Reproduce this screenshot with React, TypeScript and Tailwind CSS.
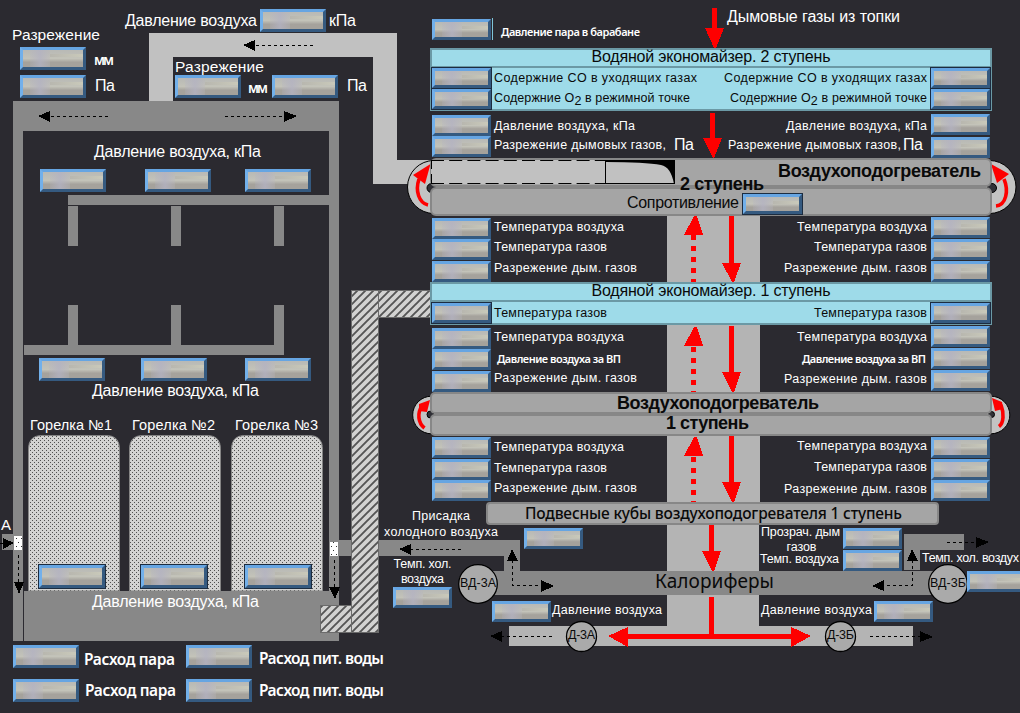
import { useLayoutEffect, useRef } from "react";
import type { ReactNode } from "react";

type Face = "sans" | "bold" | "noto" | "notoMedium" | "notoBold";

const faces: Record<Face, string> = {
  sans: "font-['Liberation_Sans',sans-serif]",
  bold: "font-['Liberation_Sans',sans-serif] font-bold",
  noto: "font-['Noto_Sans',sans-serif]",
  notoMedium: "font-['Noto_Sans',sans-serif] font-medium",
  notoBold: "font-['Noto_Sans',sans-serif] font-semibold",
};

interface LabelProps {
  className: string;
  face?: Face;
  dark?: boolean;
  children: ReactNode;
}

/* A caption whose letters are spaced out to fill the width of its box. */
function Label({ className, face = "sans", dark = false, children }: LabelProps) {
  const box = useRef<HTMLDivElement>(null);
  const text = useRef<HTMLSpanElement>(null);
  useLayoutEffect(() => {
    if (!box.current || !text.current) return;
    text.current.style.letterSpacing = "0px";
    const count = (text.current.textContent ?? "").length;
    const room = box.current.clientWidth - text.current.getBoundingClientRect().width;
    text.current.style.letterSpacing = `${room / Math.max(1, count - 1)}px`;
  }, []);
  return (
    <div
      ref={box}
      className={`h-[20px] shrink-0 leading-[20px] whitespace-nowrap ${faces[face]} ${dark ? "text-[#0a0a0a]" : "text-white"} ${className}`}
    >
      <span ref={text}>{children}</span>
    </div>
  );
}

function Display({ className = "", wide = false, framed = false }: { className?: string; wide?: boolean; framed?: boolean }) {
  const size = wide ? "h-[23px] w-[66px]" : framed ? "h-[20px] w-[59px]" : "h-[21px] w-[59px]";
  return (
    <div
      className={`flex shrink-0 border-[3px] border-t-[#66a5e2] border-r-[#355a80] border-b-[#355a80] border-l-[#72b0ea] bg-linear-to-b from-[#b9bab6] from-5% via-[#c3c3b9] via-50% to-[#a5a29c] to-72% pl-[7px] ${size} ${framed ? "outline outline-[#1c2c40]" : ""} ${className}`}
    >
      <div className="h-full w-[20px] bg-linear-to-r from-[#b2b1c4]/20 via-[#b3b2c2]/80 to-[#b8b6bc]/30" />
      <div className="mt-[4px] h-[3px] flex-1 bg-linear-to-r from-[#b8b7af] to-[#c9c9ba]" />
    </div>
  );
}

const RED = "#fe0000";

function Pipes() {
  return (
    <svg className="absolute inset-0" width="1020" height="713" viewBox="0 0 1020 713">
      <defs>
        <pattern id="dots" width="4" height="4" patternUnits="userSpaceOnUse">
          <rect width="4" height="4" fill="#d3d3d2" />
          <rect x="0" y="0" width="1" height="1" fill="#505050" />
          <rect x="2" y="2" width="1" height="1" fill="#505050" />
        </pattern>
        <pattern id="sparse" width="5" height="8" patternUnits="userSpaceOnUse">
          <rect width="5" height="8" fill="#fff" />
          <rect x="1" y="2" width="1" height="1" fill="#333" />
          <rect x="3" y="6" width="1" height="1" fill="#333" />
        </pattern>
        <pattern id="hatch" width="8" height="8" patternUnits="userSpaceOnUse">
          <rect width="8" height="8" fill="#d2d2d1" />
          <path d="M-2 2L2 -2M-1 9L9 -1M6 10L10 6" stroke="#555" strokeWidth="1.9" />
        </pattern>
      </defs>

      {/* boiler casing and burner headers */}
      <g fill="#888888" shapeRendering="crispEdges">
        <path d="M13 101H339V641H24V591H329V131H23V641H13Z" />
        <rect x="68" y="195" width="261" height="10" />
        <rect x="24" y="345" width="260" height="10" />
        {[68, 171, 274].map((x) => (
          <g key={x}>
            <rect x={x} y="206" width="10" height="40" />
            <rect x={x} y="305" width="10" height="41" />
          </g>
        ))}
        <rect x="2" y="534" width="12" height="16" />
      </g>

      {/* burners */}
      {[28.5, 129.5, 231.5].map((x) => (
        <path key={x} d={`M${x} 591V449Q${x} 435.500 ${x + 13} 435.500H${x + 78}Q${x + 91} 435.500 ${x + 91} 449V591Z`} fill="url(#dots)" stroke="#858585" />
      ))}
      <rect x="24" y="591" width="315" height="50" fill="#888" />

      {/* ducts */}
      <path d="M149 33H397V160H431V184H373V57H173V101H149Z" fill="#c1c1c1" shapeRendering="crispEdges" />
      <g fill="#b4b4b4" shapeRendering="crispEdges">
        <rect x="667" y="216" width="93" height="288" />
        <rect x="667" y="524" width="92" height="103" />
        <rect x="509" y="626" width="404" height="20" />
      </g>
      <g fill="#888888" shapeRendering="crispEdges">
        <path d="M339 540H520V571H960V595H480V571H504V556H339Z" />
        <path d="M904 534H964V550H920V570H904Z" />
      </g>
      <g stroke="#6b6b6b" fill="url(#hatch)">
        <rect x="378.500" y="290.500" width="54" height="27" />
        <rect x="320.500" y="605.500" width="31" height="27" />
        <rect x="351.500" y="290.500" width="27" height="342" />
      </g>
      <rect x="14" y="536" width="8" height="14" fill="url(#sparse)" />
      <rect x="330" y="542" width="8" height="14" fill="url(#sparse)" />

      {/* turning chambers */}
      <g fill="#c3c3c3" stroke="#000">
        <circle cx="434" cy="187" r="26.500" />
        <circle cx="989.500" cy="187" r="26.500" />
        <circle cx="431.500" cy="415" r="18.800" />
        <circle cx="991" cy="415" r="18.800" />
      </g>
      <g fill="#303036" stroke="#000">
        <circle cx="431.500" cy="188" r="4.500" />
        <circle cx="992" cy="188" r="4.500" />
        <circle cx="430.500" cy="414.500" r="3.500" />
        <circle cx="991.500" cy="414.500" r="3" />
      </g>
      <g fill="none" stroke={RED} strokeWidth="3.600">
        <path d="M428 205C419 203 415 191 419 179" />
        <path d="M996 206C1006 205 1009 191 1004 179" />
        <path d="M424.500 428C418 423 417 413 422 406" />
        <path d="M999 426.500C1004 423 1004 413 1001 405" />
      </g>
      <g fill={RED}>
        <path d="M430.500 164L413 175L425 184Z" />
        <path d="M991 164L1009 174L997 183Z" />
        <path d="M430 400L419 404V411L427 412Z" />
        <path d="M992 398L1002 402L1003 409L995 411Z" />
      </g>

      {/* flue gas flow */}
      <g fill={RED} shapeRendering="crispEdges">
        <path d="M712 8H717V28H724L716 48H714L705 28H712Z" />
        <path d="M710 113H715V138H722L714 158H713L703 138H710Z" />
        <path d="M729 216H734V263H741L734 282H732L722 263H729Z" />
        <path d="M729 326H734V372H741L734 392H732L722 372H729Z" />
        <path d="M729 436H734V482H741L734 502H732L722 482H729Z" />
        <path d="M709 525H714V551H721L714 571H712L702 551H709Z" />
        <path d="M709 597H714V634H791V627L811 636L791 647V639H628V647L608 636L628 627V634H709Z" />
        <path d="M694 216H697L703 235H684Z" />
        <path d="M694 327H697L703 346H684Z" />
        <path d="M694 437H697L703 456H684Z" />
      </g>
      <path d="M693.500 235V282M693.500 347V392M693.500 457V502" stroke={RED} strokeWidth="5" strokeDasharray="5 6" shapeRendering="crispEdges" />

      {/* fans */}
      <g fill="#aaaaaa" stroke="#000" strokeWidth="1.300">
        <circle cx="478" cy="584" r="19.300" />
        <circle cx="948" cy="584" r="19.300" />
        <circle cx="581.500" cy="636.500" r="15" />
        <circle cx="840.500" cy="636.500" r="15" />
      </g>

      {/* air flow */}
      <g stroke="#000" fill="none" strokeDasharray="3 3" shapeRendering="crispEdges">
        <path d="M313 45.500H255M108 116.500H50M225 116.500H284M461 549.500H411M512.500 560V585.500H541M912.500 560V585.500H884M947 542.500H976M552 636.500H502M870 636.500H920M18.500 555V582M334.500 560V587" />
      </g>
      <path d="M0 543.500H4" stroke="#000" />
      <g fill="#000" shapeRendering="crispEdges">
        <path d="M243 45L255 40V51Z" />
        <path d="M38 116L50 111V122Z" />
        <path d="M297 116L284 111V122Z" />
        <path d="M399 549L411 544V555Z" />
        <path d="M512 549L507 561H518Z" />
        <path d="M554 586L541 580V592Z" />
        <path d="M912 549L907 561H918Z" />
        <path d="M872 586L884 580V591Z" />
        <path d="M989 542L976 537V548Z" />
        <path d="M490 636L502 631V642Z" />
        <path d="M933 637L920 631V642Z" />
        <path d="M14 543L3 538V549Z" />
        <path d="M19 594L14 582H24Z" />
        <path d="M335 599L329 587H340Z" />
      </g>
    </svg>
  );
}

/* The air duct's outlet drawn over the upper bar of the second stage heater. */
function DuctOutlet() {
  return (
    <svg className="absolute top-0.5 left-px" width="244" height="24" viewBox="431 160 244 24">
      <rect x="431" y="160" width="244" height="24" fill="#c1c1c1" />
      <g stroke="#000" fill="none">
        <path d="M431 160.500H605M431 183.500H605" strokeDasharray="13 5.200" />
        <path d="M431.500 160V184" strokeDasharray="9 5" />
        <path d="M605.500 160V184M605 183.500H675M605 160.500H675" />
      </g>
      <path d="M606 160H675V184H674Q671 167 661 165Q645 162 606 162Z" fill="#000" />
    </svg>
  );
}

interface Row {
  text: ReactNode;
  label: string;
  row?: string;
  face?: Face;
  unit?: boolean;
}

/* One column of readings: the display stands on the outer side, its caption on the inner one. */
function Readings({ rows, right = false, framed = false, className = "" }: { rows: Row[]; right?: boolean; framed?: boolean; className?: string }) {
  return (
    <div className={`flex flex-col ${className}`}>
      {rows.map((r, i) => (
        <div key={i} className={`flex items-start ${right ? "flex-row-reverse gap-1" : "gap-[3px]"} ${r.row ?? "h-[22px]"}`}>
          <Display framed={framed} />
          {r.unit && right && <Label className="mr-1 -mt-[2px] w-[20px] text-[16px]">Па</Label>}
          <Label face={r.face} dark={framed} className={r.label}>{r.text}</Label>
          {r.unit && !right && <Label className="-mt-px ml-[5px] w-[20px] text-[16px]">Па</Label>}
        </div>
      ))}
    </div>
  );
}

function Group({ className, left, right, leftClass, rightClass }: { className: string; left: Row[]; right: Row[]; leftClass: string; rightClass: string }) {
  return (
    <div className={`flex justify-between pr-0.5 pl-0.5 ${className}`}>
      <Readings rows={left} className={leftClass} />
      <Readings rows={right} right className={rightClass} />
    </div>
  );
}

function Economiser({ title, className, rows, rightRows }: { title: string; className: string; rows: Row[]; rightRows: Row[] }) {
  return (
    <section className={`flex flex-col border-2 border-[#6b99a5] bg-[#9edbe9] ${className}`}>
      <header className="flex h-[18px] justify-center border-b-2 border-[#6b99a5]">
        <Label dark className="-mt-[3px] w-[239px] text-[16px]">{title}</Label>
      </header>
      <div className={`flex justify-between ${rows.length === 1 ? "pt-px" : ""}`}>
        <Readings rows={rows} framed />
        <Readings rows={rightRows} framed right />
      </div>
    </section>
  );
}

const oxygen = (
  <>
    Содержние O<span className="relative top-[3px]">2</span> в режимной точке
  </>
);
const AIR = "Температура воздуха";
const GAS = "Температура газов";
const DRAFT = "Разрежение дым. газов";
const PRESSURE = "Давление воздуха, кПа";

function Tract() {
  return (
    <div className="relative flex w-[562px] flex-col">
      <header className="flex h-[48px] items-start pl-0.5">
        <Display className="mt-[19px]" />
        <div className="mt-[18px] ml-px h-[22px] w-px bg-[#7fc4d8]" />
        <Label face="notoBold" className="mt-[22px] ml-2 w-[139px] text-[11px]">Давление пара в барабане</Label>
        <Label className="mt-[7px] ml-[87px] w-[173px] text-[16px]">Дымовые газы из топки</Label>
      </header>

      <Economiser
        title="Водяной экономайзер. 2 ступень"
        className="h-[63px]"
        rows={[
          { text: "Содержние CO в уходящих газах", label: "w-[203px] text-[12.5px]", row: "h-[21px]" },
          { text: oxygen, label: "-mt-px w-[196px] text-[12.5px]", row: "h-[20px]" },
        ]}
        rightRows={[
          { text: "Содержние CO в уходящих газах", label: "w-[203px] text-[12.5px]", row: "h-[21px]" },
          { text: oxygen, label: "-mt-px w-[197px] text-[12.5px]", row: "h-[20px]" },
        ]}
      />

      <Group
        className="h-[47px]"
        leftClass="pt-1"
        rightClass="pt-[3px]"
        left={[
          { text: PRESSURE, label: "mt-px w-[141px] text-[12.5px]", row: "h-[21px]" },
          { text: "Разрежение дымовых газов,", label: "-mt-px w-[172px] text-[12.5px]", unit: true },
        ]}
        right={[
          { text: PRESSURE, label: "mt-0.5 w-[141px] text-[12.5px]", row: "h-[23px]" },
          { text: "Разрежение дымовых газов,", label: "-mr-[2px] -mt-[2px] w-[173px] text-[12.5px]", row: "h-[21px]", unit: true },
        ]}
      />

      <section className="relative flex h-[58px] flex-col">
        <div className="flex h-[29px] justify-end rounded-[6px] border-2 border-[#878787] bg-[#a5a5a5] pr-[9px]">
          <Label face="bold" dark className="mt-px w-[203px] text-[18px]">Воздухоподогреватель</Label>
        </div>
        <div className="flex h-[29px] items-start gap-1 rounded-[6px] border-2 border-[#878787] bg-[#a5a5a5] pl-[195px]">
          <Label dark className="mt-1 w-[112px] text-[16px]">Сопротивление</Label>
          <Display framed className="mt-[5px]" />
        </div>
        <DuctOutlet />
        <Label face="bold" dark className="absolute top-[16px] left-[250px] w-[84px] text-[18px]">2 ступень</Label>
      </section>

      <Group
        className="h-[66px]"
        leftClass="pt-0.5"
        rightClass="pt-px"
        left={[
          { text: AIR, label: "-mt-px w-[130px] text-[12.5px]" },
          { text: GAS, label: "-mt-[2px] w-[113px] text-[12.5px]" },
          { text: DRAFT, label: "-mt-[3px] w-[143px] text-[12.5px]" },
        ]}
        right={[
          { text: AIR, label: "w-[130px] text-[12.5px]", row: "h-[23px]" },
          { text: GAS, label: "-mt-[2px] w-[113px] text-[12.5px]" },
          { text: DRAFT, label: "-mt-[3px] w-[143px] text-[12.5px]" },
        ]}
      />

      <Economiser
        title="Водяной экономайзер. 1 ступень"
        className="h-[43px]"
        rows={[{ text: GAS, label: "w-[113px] text-[12.5px]" }]}
        rightRows={[{ text: GAS, label: "w-[113px] text-[12.5px]" }]}
      />

      <Group
        className="h-[67px]"
        leftClass="pt-[3px]"
        rightClass="pt-px"
        left={[
          { text: AIR, label: "-mt-px w-[130px] text-[12.5px]" },
          { text: "Давление воздуха за ВП", label: "ml-[3px] w-[124px] text-[11px]", face: "notoBold" },
          { text: DRAFT, label: "-mt-[3px] w-[143px] text-[12.5px]" },
        ]}
        right={[
          { text: AIR, label: "mt-px w-[130px] text-[12.5px]" },
          { text: "Давление воздуха за ВП", label: "mt-px mr-px w-[124px] text-[11px]", face: "notoBold" },
          { text: DRAFT, label: "-mt-px w-[143px] text-[12.5px]" },
        ]}
      />

      <section className="flex h-[44px] flex-col">
        <div className="flex h-[22px] rounded-[5px] border-2 border-[#878787] bg-[#a5a5a5] pl-[185px]">
          <Label face="bold" dark className="-mt-px w-[202px] text-[18px]">Воздухоподогреватель</Label>
        </div>
        <div className="flex h-[22px] rounded-[5px] border-2 border-[#878787] bg-[#a5a5a5] pl-[234px]">
          <Label face="bold" dark className="-mt-[3px] w-[83px] text-[18px]">1 ступень</Label>
        </div>
      </section>

      <Group
        className="h-[66px]"
        leftClass="pt-px"
        rightClass="pt-px"
        left={[
          { text: AIR, label: "w-[130px] text-[12.5px]" },
          { text: GAS, label: "-mt-px w-[113px] text-[12.5px]" },
          { text: DRAFT, label: "-mt-[2px] w-[143px] text-[12.5px]" },
        ]}
        right={[
          { text: AIR, label: "-mt-px w-[130px] text-[12.5px]" },
          { text: GAS, label: "-mt-[2px] w-[113px] text-[12.5px]", row: "h-[21px]" },
          { text: DRAFT, label: "-mt-px w-[143px] text-[12.5px]" },
        ]}
      />

      <div className="mr-[53px] ml-[56px] flex h-[23px] rounded-[4px] border-2 border-[#878787] bg-[#a5a5a5] pl-[37px]">
        <Label face="notoMedium" dark className="-mt-px w-[377px] text-[15.5px]">Подвесные кубы воздухоподогревателя 1 ступень</Label>
      </div>
    </div>
  );
}

function Boiler() {
  return (
    <div className="relative flex w-[430px] flex-col">
      <header className="flex h-[101px]">
        <div className="flex w-[125px] flex-col pt-[25px] pl-3">
          <Label className="w-[88px] text-[15.5px]">Разрежение</Label>
          <div className="mt-0.5 ml-2 flex gap-2">
            <Display wide />
            <Label face="notoBold" className="mt-[3px] w-[20px] text-[13.5px]">мм</Label>
          </div>
          <div className="mt-[5px] ml-2 flex gap-[9px]">
            <Display wide />
            <Label className="mt-px w-[20px] text-[16px]">Па</Label>
          </div>
        </div>
        <div className="flex flex-col pt-[9px]">
          <div className="flex gap-[3px]">
            <Label className="mt-0.5 w-[132px] text-[16px]">Давление воздуха</Label>
            <Display wide />
            <Label className="mt-0.5 w-[27px] text-[16px]">кПа</Label>
          </div>
          <div className="mt-[25px] ml-[50px] flex flex-col">
            <Label className="w-[89px] text-[15.5px]">Разрежение</Label>
            <div className="-mt-[2px] flex">
              <Display wide />
              <Label face="notoBold" className="mt-[3px] mr-1 ml-[7px] w-[20px] text-[13.5px]">мм</Label>
              <Display wide />
              <Label className="mt-px ml-[9px] w-[20px] text-[16px]">Па</Label>
            </div>
          </div>
        </div>
      </header>

      <section className="ml-[13px] flex h-[540px] w-[326px] flex-col pt-[41px]">
        <Label className="ml-[81px] w-[167px] text-[16px]">{PRESSURE}</Label>
        <div className="mt-[7px] flex pl-[27px]">
          <Display wide />
          <Display wide className="ml-[39px]" />
          <Display wide className="ml-[34px]" />
        </div>
        <div className="mt-[166px] flex pl-[26px]">
          <Display wide />
          <Display wide className="ml-[36px]" />
          <Display wide className="ml-[38px]" />
        </div>
        <Label className="ml-[79px] w-[167px] text-[16px]">{PRESSURE}</Label>
        <div className="mt-[14px] flex gap-[20px] pl-[17px]">
          <Label className="w-[82px] text-[14.5px]">Горелка №1</Label>
          <Label className="w-[83px] text-[14.5px]">Горелка №2</Label>
          <Label className="w-[83px] text-[14.5px]">Горелка №3</Label>
        </div>
        <div className="mt-[130px] flex pl-[26px]">
          <Display wide framed />
          <Display wide framed className="ml-[36px]" />
          <Display wide framed className="ml-[38px]" />
        </div>
        <Label className="mt-1 ml-[79px] w-[167px] text-[16px]">{PRESSURE}</Label>
      </section>

      <footer className="ml-[13px] flex flex-col gap-[10px] pt-1">
        <div className="flex">
          <Display wide />
          <Label face="notoBold" className="mt-1 ml-[5px] w-[91px] text-[15.5px]">Расход пара</Label>
          <Display wide className="ml-[11px]" />
          <Label face="notoBold" className="mt-[3px] ml-[7px] w-[125px] text-[15.5px]">Расход пит. воды</Label>
        </div>
        <div className="flex">
          <Display wide />
          <Label face="notoBold" className="mt-px ml-[6px] w-[91px] text-[15.5px]">Расход пара</Label>
          <Display wide className="ml-[10px]" />
          <Label face="notoBold" className="mt-px ml-[7px] w-[125px] text-[15.5px]">Расход пит. воды</Label>
        </div>
      </footer>
    </div>
  );
}

/* Nodes of the air supply lines, placed at their points of the scheme. */
function SupplyNodes() {
  return (
    <>
      <Label className="absolute top-[515px] left-px w-[10px] text-[15px]">А</Label>
      <div className="absolute top-[506px] left-[384px] flex w-[114px] flex-col items-center">
        <Label className="w-[58px] text-[12.5px]">Присадка</Label>
        <Label className="-mt-1 w-[114px] text-[12.5px]">холодного воздуха</Label>
      </div>
      <div className="absolute top-[554px] left-[393px] flex w-[59px] flex-col items-center">
        <Label className="w-[58px] text-[12.5px]">Темп. хол.</Label>
        <Label className="-mt-[5px] w-[43px] text-[12.5px]">воздуха</Label>
        <Display className="-mt-[2px]" />
      </div>
      <Display className="absolute top-[528px] left-[524px]" />
      <div className="absolute top-[600px] left-[492px] flex items-start gap-px">
        <Display className="mt-px" />
        <Label className="w-[110px] text-[12.5px]">Давление воздуха</Label>
      </div>
      <div className="absolute top-[600px] left-[761px] flex items-start gap-[2px]">
        <Label className="w-[111px] text-[12.5px]">Давление воздуха</Label>
        <Display className="mt-px" />
      </div>
      <div className="absolute top-[522px] left-[760px] flex items-start gap-1">
        <div className="flex w-[79px] flex-col items-center">
          <Label className="ml-[2px] w-[79px] text-[12.5px]">Прозрач. дым</Label>
          <Label className="-mt-[5px] ml-[4px] w-[30px] text-[12.5px]">газов</Label>
          <Label className="-mt-[8px] w-[79px] text-[12.5px]">Темп. воздуха</Label>
        </div>
        <div className="mt-[6px] flex flex-col gap-px">
          <Display />
          <Display />
        </div>
      </div>
      <div className="absolute top-[548px] left-[922px] flex flex-col">
        <Label className="w-[97px] text-[12.5px]">Темп. хол. воздух</Label>
        <Display className="mt-[3px] ml-[45px]" />
      </div>
      <Label face="noto" dark className="absolute top-[571px] left-[655px] w-[119px] text-[19px]">Калориферы</Label>
      <Label dark className="absolute top-[573px] left-[460px] w-[36px] text-[12.5px]">ВД-3А</Label>
      <Label dark className="absolute top-[573px] left-[930px] w-[36px] text-[12.5px]">ВД-3Б</Label>
      <Label dark className="absolute top-[625px] left-[568px] w-[27px] text-[12.5px]">Д-3А</Label>
      <Label dark className="absolute top-[625px] left-[827px] w-[27px] text-[12.5px]">Д-3Б</Label>
    </>
  );
}

export default function App() {
  return (
    <main className="relative flex h-[713px] w-[1020px] items-start overflow-hidden bg-[#2b2a30]">
      <Pipes />
      <Boiler />
      <Tract />
      <SupplyNodes />
    </main>
  );
}
